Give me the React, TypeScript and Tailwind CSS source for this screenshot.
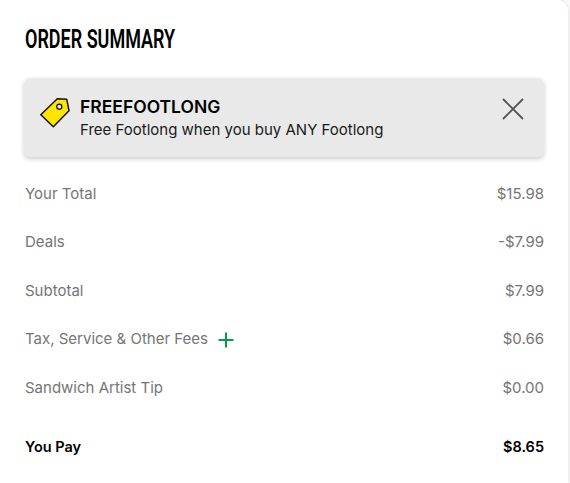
export default function App() {
  const rows = [
    { label: "Your Total", value: "$15.98" },
    { label: "Deals", value: "-$7.99" },
    { label: "Subtotal", value: "$7.99" },
    { label: "Tax, Service & Other Fees", value: "$0.66", plus: true },
    { label: "Sandwich Artist Tip", value: "$0.00" },
  ];

  return (
    <div className="h-[483px] w-[570px] overflow-hidden bg-[#fafafa] font-['Inter','Liberation_Sans',sans-serif]">
      <div className="h-[483px] w-[568px] rounded-tr-[10px] bg-white pl-6 pr-6 pt-[26px] shadow-[0_0_3px_rgba(0,0,0,0.15)]">
        <h1 className="ml-px h-[28px] w-[150px] origin-left scale-x-[0.72] whitespace-nowrap font-['Roboto','Liberation_Sans',sans-serif] text-[25px] font-semibold leading-[28px] text-black">
          ORDER SUMMARY
        </h1>

        {/* promo */}
        <div className="mt-[24px] flex h-[79px] w-[520px] items-start rounded-[6px] bg-[#e9e9e9] pl-4 pr-[19px] pt-[17px] shadow-[0_2px_5px_rgba(0,0,0,0.2)]">
          <svg width="30" height="30" viewBox="0 0 30 30" className="mt-[3px] shrink-0">
            <path d="M0.8 16.7 L17.3 0.8 L26.7 1.2 L29 12.7 L13.3 28.7 Z" fill="#ffe600" stroke="#111" strokeWidth="1.5" strokeLinejoin="round" />
            <circle cx="19.3" cy="8.7" r="2.5" fill="#e9e9e9" stroke="#111" strokeWidth="1.3" />
          </svg>
          <div className="ml-[10px] flex-1">
            <div className="text-[17.5px] font-semibold leading-[23px] text-black">FREEFOOTLONG</div>
            <div className="text-[15px] leading-[23px] text-[#1a1a1a]">Free Footlong when you buy ANY Footlong</div>
          </div>
          <svg width="24" height="24" viewBox="0 0 24 24" className="mt-[2px] shrink-0">
            <path d="M2 2 L22 22 M22 2 L2 22" stroke="#555" strokeWidth="1.8" fill="none" />
          </svg>
        </div>

        {/* totals */}
        <div className="mt-[26px] flex w-[520px] flex-col gap-[26.5px]">
          {rows.map((row) => (
            <div key={row.label} className="flex h-[22px] items-center justify-between pl-px text-[15px] text-[#757575]">
              <div className="flex items-center">
                <span>{row.label}</span>
                {row.plus && (
                  <svg width="16" height="16" viewBox="0 0 16 16" className="ml-[10px]">
                    <path d="M8 0.5 V15.5 M0.5 8 H15.5" stroke="#0a9a4b" strokeWidth="2" fill="none" />
                  </svg>
                )}
              </div>
              <span>{row.value}</span>
            </div>
          ))}
        </div>

        <div className="mt-[37px] flex h-[22px] w-[520px] items-center justify-between pl-px text-[14.5px] font-semibold text-black">
          <span>You Pay</span>
          <span>$8.65</span>
        </div>
      </div>
    </div>
  );
}
